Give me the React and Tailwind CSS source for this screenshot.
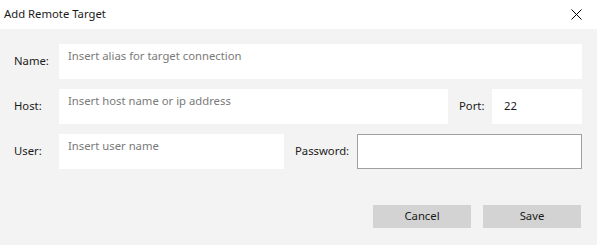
const Label = ({ children, className = "" }) => (
  <div className={`text-[11.3px] text-[#1a1a1a] ${className}`}>{children}</div>
);

const Field = ({ placeholder, value, className = "" }) => (
  <div className={`h-[35px] bg-white text-[11.3px] ${className}`}>
    {placeholder && (
      <div className="pl-[9px] pt-[4px] leading-[16px] text-[#7a7a7a]">{placeholder}</div>
    )}
    {value && (
      <div className="flex h-full items-center pl-[12px] text-[#1a1a1a]">{value}</div>
    )}
  </div>
);

const App = () => {
  return (
    <div
      className="flex h-[245px] w-[597px] flex-col bg-[#f3f3f3]"
      style={{ fontFamily: '"Noto Sans", "Open Sans", sans-serif' }}
    >
      <div className="flex h-[29px] items-center justify-between bg-white pl-[4px] pr-[15px]">
        <div className="text-[11.3px] text-[#1a1a1a]">Add Remote Target</div>
        <svg width="11" height="11" viewBox="0 0 11 11" className="text-black">
          <path d="M0.5 0.5 L10.5 10.5 M10.5 0.5 L0.5 10.5" stroke="currentColor" strokeWidth="1" />
        </svg>
      </div>

      <div className="flex flex-col gap-[10px] pl-[14px] pr-[15px] pt-[15px]">
        <div className="flex items-center">
          <Label className="w-[45px]">Name:</Label>
          <Field placeholder="Insert alias for target connection" className="flex-1" />
        </div>

        <div className="flex items-center">
          <Label className="w-[45px]">Host:</Label>
          <Field placeholder="Insert host name or ip address" className="flex-1" />
          <Label className="ml-[11px] w-[33px]">Port:</Label>
          <Field value="22" className="w-[90px]" />
        </div>

        <div className="flex items-center">
          <Label className="w-[45px]">User:</Label>
          <Field placeholder="Insert user name" className="w-[225px]" />
          <Label className="ml-[11px] w-[62px]">Password:</Label>
          <div className="h-[35px] w-[225px] border border-[#a0a0a0] bg-white" />
        </div>
      </div>

      <div className="mt-[36px] flex justify-end gap-[12px] pr-[16px]">
        <button className="h-[23px] w-[98px] bg-[#d3d3d3] text-[11.3px] text-[#1a1a1a]">Cancel</button>
        <button className="h-[23px] w-[98px] bg-[#d3d3d3] text-[11.3px] text-[#1a1a1a]">Save</button>
      </div>
    </div>
  );
};

export default App;
